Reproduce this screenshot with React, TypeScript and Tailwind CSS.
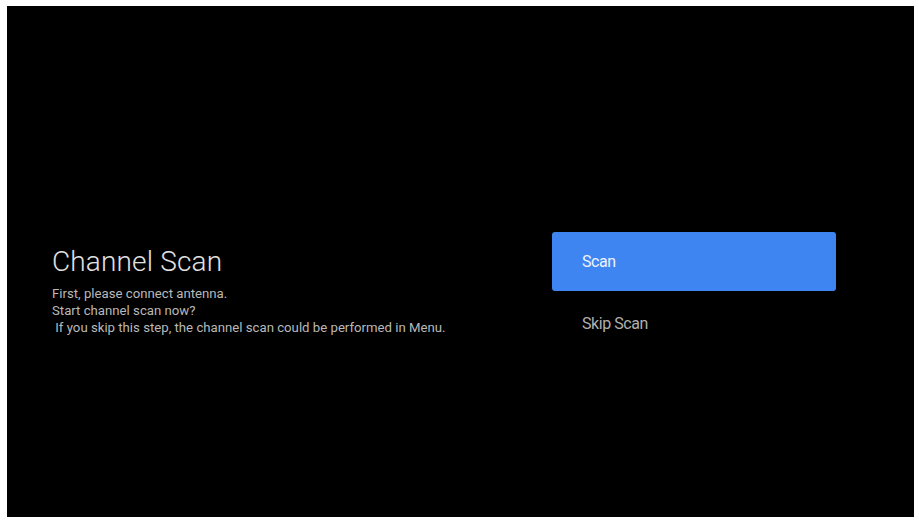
import React from "react";

const App = () => {
  return (
    <div className="w-[919px] h-[520px] bg-white pt-[6px] pl-[7px] font-['Roboto',sans-serif]">
      <div className="w-[907px] h-[511px] bg-black flex pt-[226px]">
        {/* intro text */}
        <div className="w-[500px] pl-[45px] pt-[14px]">
          <h1 className="text-[28px] leading-[32px] font-light tracking-[0.15px] text-[#e2e2e2]">
            Channel Scan
          </h1>
          <div className="mt-[7px] text-[13.2px] leading-[17px] text-[#b9b9b9] whitespace-pre">
            <p>First, please connect antenna.</p>
            <p>Start channel scan now?</p>
            <p> If you skip this step, the channel scan could be performed in Menu.</p>
          </div>
        </div>

        {/* options */}
        <div className="w-[284px] ml-[45px] flex flex-col gap-[3px]">
          <div className="h-[59px] rounded-[3px] bg-[#3f85f2] flex items-center pl-[30px] text-[16px] tracking-[-0.45px] text-[#eef3fd]">
            Scan
          </div>
          <div className="h-[59px] flex items-center pl-[30px] text-[16px] tracking-[-0.45px] text-[#b0b0b0]">
            Skip Scan
          </div>
        </div>
      </div>
    </div>
  );
};

export default App;
